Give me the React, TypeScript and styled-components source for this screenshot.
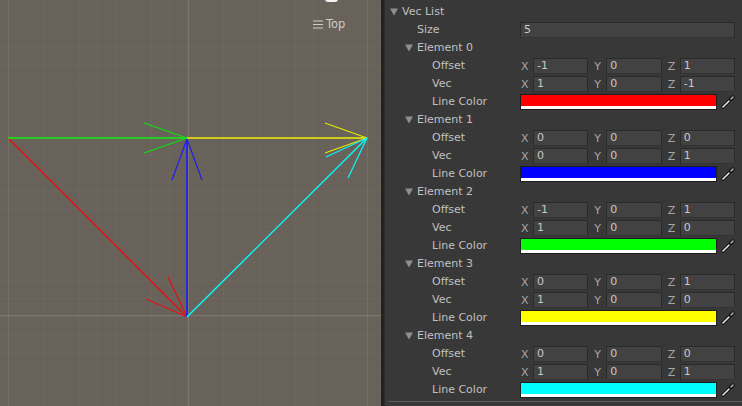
import React from 'react';
import styled, { createGlobalStyle } from 'styled-components';

const GlobalStyle = createGlobalStyle`
  html, body { margin: 0; padding: 0; background: #383838; }
  body { font-family: "DejaVu Sans", "Liberation Sans", sans-serif; font-size: 11px; }
`;

type Vec3 = [number, number, number];
interface Element { offset: Vec3; vec: Vec3; color: string; }

const elements: Element[] = [
  { offset: [-1, 0, 1], vec: [1, 0, -1], color: '#ff0000' },
  { offset: [0, 0, 0], vec: [0, 0, 1], color: '#0000ff' },
  { offset: [-1, 0, 1], vec: [1, 0, 0], color: '#00ff00' },
  { offset: [0, 0, 1], vec: [1, 0, 0], color: '#ffff00' },
  { offset: [0, 0, 0], vec: [1, 0, 1], color: '#00ffff' },
];

const Page = styled.div`
  display: flex;
  width: 742px;
  height: 406px;
  overflow: hidden;
`;

const Scene = styled.div`
  position: relative;
  width: 381px;
  height: 406px;
  background: #68625b;
  flex: none;
`;

const SceneSvg = styled.svg`
  display: block;
`;

const ViewLabel = styled.div`
  position: absolute;
  left: 313px;
  top: 17px;
  display: flex;
  align-items: center;
  gap: 3px;
  color: #cfcbc6;
  font-size: 11.5px;
  line-height: 14px;
`;

const GizmoTip = styled.div`
  position: absolute;
  left: 325px;
  top: -4px;
  width: 13px;
  height: 6px;
  border-radius: 0 0 3px 3px;
  background: #f2f2f2;
`;

const Divider = styled.div`
  width: 3px;
  flex: none;
  background: #222222;
  border-right: 1px solid #2d2d2d;
`;

const Inspector = styled.div`
  flex: 1;
  display: flex;
  flex-direction: column;
  padding: 3px 8px 0 0;
  background: #383838;
  color: #c0c0c0;
`;

const Row = styled.div`
  display: flex;
  align-items: center;
  height: 18px;
`;

const Label = styled.div<{ $pad: number }>`
  width: 135px;
  flex: none;
  box-sizing: border-box;
  padding-left: ${(p) => p.$pad}px;
  display: flex;
  align-items: center;
  white-space: nowrap;
  line-height: 18px;
`;

const Arrow = styled.svg`
  width: 8px;
  height: 8px;
  margin-right: 4px;
  flex: none;
`;

const Value = styled.div`
  flex: 1;
  display: flex;
  align-items: center;
  min-width: 0;
`;

const Field = styled.div`
  flex: 1;
  box-sizing: border-box;
  height: 16px;
  padding: 0 3px;
  background: #424242;
  border: 1px solid #2a2a2a;
  border-bottom-color: #333;
  border-radius: 1px;
  color: #c8c8c8;
  line-height: 14px;
  overflow: hidden;
`;

const VectorGrid = styled.div`
  flex: 1;
  display: grid;
  grid-template-columns: 1fr 1fr 1fr;
  column-gap: 5px;
`;

const Axis = styled.div`
  display: flex;
  align-items: center;
`;

const AxisLabel = styled.span`
  width: 12px;
  flex: none;
  padding-left: 1px;
  color: #a6a6a6;
`;

const ColorField = styled.div`
  width: 197px;
  height: 16px;
  box-sizing: border-box;
  border: 1px solid #1e1e1e;
  display: flex;
  flex-direction: column;
  flex: none;
`;

const ColorFill = styled.div<{ $color: string }>`
  flex: 1;
  background: ${(p) => p.$color};
`;

const AlphaBar = styled.div`
  height: 3px;
  background: #ffffff;
`;

const Picker = styled.svg`
  width: 14px;
  height: 14px;
  margin-left: 4px;
  flex: none;
`;

const Separator = styled.div`
  margin-top: 2px;
  margin-left: 3px;
  height: 1px;
  background: #5a5d60;
  margin-right: -8px;
`;

const Fold = () => (
  <Arrow viewBox="0 0 8 8">
    <polygon points="0,0.5 8,0.5 4,7.5" fill="#8e8e8e" />
  </Arrow>
);

const Pipette = () => (
  <Picker viewBox="0 0 14 14">
    <line x1="2" y1="12" x2="10" y2="4" stroke="#111" strokeWidth="3.6" strokeLinecap="round" />
    <line x1="2" y1="12" x2="10" y2="4" stroke="#e8e8e8" strokeWidth="1.6" strokeLinecap="round" />
    <line x1="9.5" y1="4.5" x2="12" y2="2" stroke="#111" strokeWidth="3.4" strokeLinecap="round" />
    <line x1="10" y1="4" x2="12" y2="2" stroke="#bdbdbd" strokeWidth="1.4" strokeLinecap="round" />
  </Picker>
);

const VectorField = ({ v }: { v: Vec3 }) => (
  <VectorGrid>
    {(['X', 'Y', 'Z'] as const).map((a, i) => (
      <Axis key={a}>
        <AxisLabel>{a}</AxisLabel>
        <Field>{v[i]}</Field>
      </Axis>
    ))}
  </VectorGrid>
);

const SceneDrawing = () => {
  const minor: number[] = [];
  for (let x = 8; x < 381; x += 17.95) minor.push(x);
  const minorY: number[] = [];
  for (let y = 137; y < 406; y += 17.95) minorY.push(y);
  for (let y = 137 - 17.95; y > 0; y -= 17.95) minorY.push(y);
  const line = (x1: number, y1: number, x2: number, y2: number, c: string, w: number, k: string) => (
    <line key={k} x1={x1} y1={y1} x2={x2} y2={y2} stroke={c} strokeWidth={w} />
  );
  return (
    <SceneSvg width="381" height="406" viewBox="0 0 381 406">
      {minor.map((x, i) => line(x, 0, x, 406, 'rgba(255,255,255,0.03)', 1, 'mx' + i))}
      {minorY.map((y, i) => line(0, y, 381, y, 'rgba(255,255,255,0.03)', 1, 'my' + i))}
      {line(8.5, 0, 8.5, 406, 'rgba(255,255,255,0.07)', 1, 'g1')}
      {line(367.5, 0, 367.5, 406, 'rgba(255,255,255,0.07)', 1, 'g2')}
      {line(188.5, 0, 188.5, 406, 'rgba(255,255,255,0.12)', 1, 'g3')}
      {line(0, 315.5, 381, 315.5, 'rgba(255,255,255,0.12)', 1, 'g4')}

      {/* red */}
      {line(8, 138, 187, 317, '#e01414', 1.5, 'r')}
      {line(168, 277, 187, 317, '#e01414', 1.2, 'r1')}
      {line(146, 299, 187, 317, '#e01414', 1.2, 'r2')}
      {/* green */}
      {line(8, 138, 187, 138, '#10f010', 1.5, 'gr')}
      {line(144, 123, 187, 138, '#10e010', 1.2, 'gr1')}
      {line(144, 153, 187, 138, '#10e010', 1.2, 'gr2')}
      {/* yellow */}
      {line(187, 138, 367, 138, '#f0f000', 1.5, 'y')}
      {line(325, 123, 367, 138, '#e8e800', 1.2, 'y1')}
      {line(325, 153, 367, 138, '#e8e800', 1.2, 'y2')}
      {/* blue */}
      {line(187, 317, 187, 139, '#2828e0', 2, 'b')}
      {line(172, 180, 187, 139, '#2020e8', 1.2, 'b1')}
      {line(202, 180, 187, 139, '#2020e8', 1.2, 'b2')}
      {/* cyan */}
      {line(187, 317, 367, 138, '#00ffff', 1.4, 'c')}
      {line(326, 157, 367, 138, '#10f0f0', 1.3, 'c1')}
      {line(348, 178, 367, 138, '#10f0f0', 1.3, 'c2')}
    </SceneSvg>
  );
};

const MenuIcon = () => (
  <svg width="10" height="9" viewBox="0 0 10 9">
    <rect x="0" y="0.5" width="10" height="1" fill="#cfcbc6" />
    <rect x="0" y="4" width="10" height="1" fill="#cfcbc6" />
    <rect x="0" y="7.5" width="10" height="1" fill="#cfcbc6" />
  </svg>
);

export default function App() {
  return (
    <>
      <GlobalStyle />
      <Page>
        <Scene>
          <SceneDrawing />
          <GizmoTip />
          <ViewLabel>
            <MenuIcon />
            <span>Top</span>
          </ViewLabel>
        </Scene>
        <Divider />
        <Inspector>
          <Row>
            <Label $pad={5}>
              <Fold />
              Vec List
            </Label>
          </Row>
          <Row>
            <Label $pad={32}>Size</Label>
            <Value>
              <Field>5</Field>
            </Value>
          </Row>
          {elements.map((el, i) => (
            <React.Fragment key={i}>
              <Row>
                <Label $pad={20}>
                  <Fold />
                  Element {i}
                </Label>
              </Row>
              <Row>
                <Label $pad={47}>Offset</Label>
                <Value>
                  <VectorField v={el.offset} />
                </Value>
              </Row>
              <Row>
                <Label $pad={47}>Vec</Label>
                <Value>
                  <VectorField v={el.vec} />
                </Value>
              </Row>
              <Row>
                <Label $pad={47}>Line Color</Label>
                <Value>
                  <ColorField>
                    <ColorFill $color={el.color} />
                    <AlphaBar />
                  </ColorField>
                  <Pipette />
                </Value>
              </Row>
            </React.Fragment>
          ))}
          <Separator />
        </Inspector>
      </Page>
    </>
  );
}
